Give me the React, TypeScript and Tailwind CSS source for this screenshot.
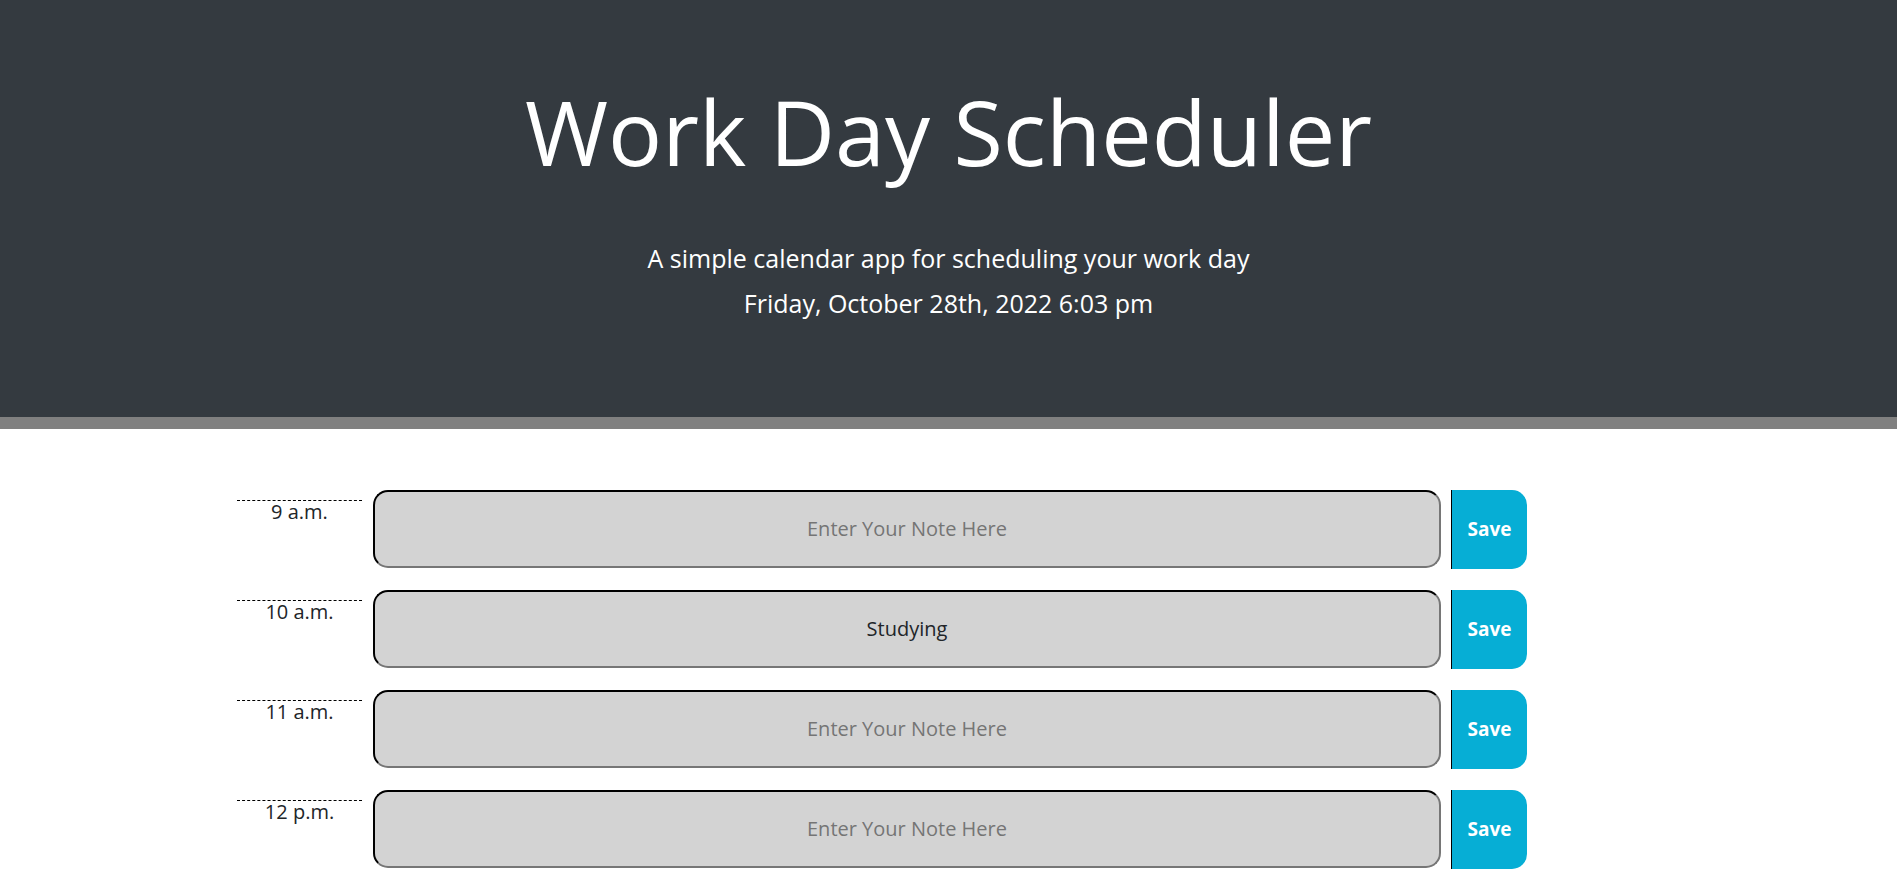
import {useState} from 'react';

const HOURS = [
    {label: '9 a.m.', note: ''},
    {label: '10 a.m.', note: 'Studying'},
    {label: '11 a.m.', note: ''},
    {label: '12 p.m.', note: ''},
];

const HourRow = ({label, note}: {label: string; note: string}) => {
    const [text, setText] = useState(note);

    return (
        <div className="flex flex-row items-start">
            <div className="mt-[10px] w-[125px] border-t border-dashed border-black text-center text-[20px] leading-[21px] text-[#212529]">
                {label}
            </div>
            <textarea
                value={text}
                onChange={e => setText(e.target.value)}
                placeholder="Enter Your Note Here"
                className="ml-[11px] h-[78px] w-[1068px] resize-none rounded-[15px] border-2 border-t-black border-l-black border-r-[#767676] border-b-[#767676] bg-[#d3d3d3] px-3 pt-[22px] text-center text-[20px] leading-[30px] text-[#212529] outline-none placeholder:text-[#757575]"
            />
            <button
                className="ml-[10px] h-[79px] w-[76px] rounded-r-[15px] border-l border-black bg-[#06aed5] text-[19px] font-bold text-white"
            >
                Save
            </button>
        </div>
    );
};

export default function App() {
    return (
        <div className="min-h-screen bg-white font-['Open_Sans',sans-serif]">
            <header className="h-[417px] bg-[#343a40] pt-[77px] text-center text-white">
                <h1 className="text-[90px] font-normal leading-[1.2]">Work Day Scheduler</h1>
                <p className="mt-[55px] text-[25px] font-normal leading-[37px]">
                    A simple calendar app for scheduling your work day
                </p>
                <p className="mt-[8px] text-[25px] font-normal leading-[37px]">
                    Friday, October 28th, 2022 6:03 pm
                </p>
            </header>
            <div className="h-[12px] bg-[#808080]"/>

            <main className="flex flex-col gap-[21px] pl-[237px] pt-[61px] pb-10">
                {HOURS.map(h => (
                    <HourRow key={h.label} label={h.label} note={h.note}/>
                ))}
            </main>
        </div>
    );
}
